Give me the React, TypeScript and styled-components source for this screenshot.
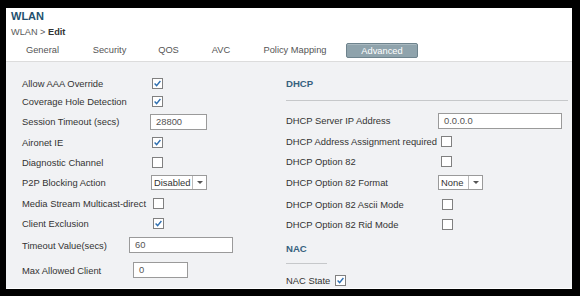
import React from "react";
import styled, { createGlobalStyle } from "styled-components";

const Global = createGlobalStyle`
  html, body { margin: 0; padding: 0; background: #000; }
  body { width: 580px; height: 296px; overflow: hidden; font-family: "Liberation Sans", Arial, sans-serif; }
`;

const Page = styled.div`
  margin: 8px 0 0 6px;
  width: 566px;
  height: 281px;
  background: #fff;
  display: flex;
  flex-direction: column;
  box-sizing: border-box;
  padding: 0 0 1px 0;
`;

const Header = styled.div`
  padding: 1px 0 0 5px;
  display: flex;
  flex-direction: column;
`;

const Title = styled.div`
  font-weight: bold;
  font-size: 11px;
  color: #23506e;
  height: 15px;
  line-height: 15px;
`;

const Crumb = styled.div`
  font-size: 9.2px;
  color: #5a5a5a;
  height: 17px;
  line-height: 17px;
  b { color: #333; }
`;

const Tabs = styled.div`
  display: flex;
  align-items: center;
  height: 19px;
`;

const Tab = styled.div<{ $w: number; $active?: boolean; $ml?: number }>`
  width: ${(p) => p.$w}px;
  margin-left: ${(p) => p.$ml ?? 0}px;
  font-size: 9.3px;
  color: ${(p) => (p.$active ? "#fff" : "#555")};
  text-align: center;
  height: 15px;
  line-height: 14px;
  box-sizing: border-box;
  ${(p) =>
    p.$active &&
    `background: #8fa3ac; border: 1px solid #6e838d; border-radius: 2px; box-shadow: inset 0 1px 0 #a9b9c0;`}
`;

const Panel = styled.div`
  flex: 1;
  margin-top: 1px;
  background: #f1f2f4;
  border-top: 1px solid #dcdcdc;
  display: grid;
  grid-template-columns: 264px 1fr;
  padding: 12px 0 0 0;
  overflow: hidden;
`;

const Col = styled.div<{ $left: number }>`
  padding-left: ${(p) => p.$left}px;
  display: flex;
  flex-direction: column;
`;

const Row = styled.div<{ $h: number; $lw: number }>`
  display: flex;
  align-items: center;
  flex: none;
  height: ${(p) => p.$h}px;
  & > span:first-child {
    width: ${(p) => p.$lw}px;
    flex: none;
    font-size: 9.4px;
    color: #333;
    white-space: nowrap;
  }
`;

const Section = styled.div<{ $lineW: number; $pt: number; $pb: number; $mb: number }>`
  font-weight: bold;
  font-size: 9.6px;
  color: #36617e;
  line-height: 20px;
  padding: ${(p) => p.$pt}px 0 ${(p) => p.$pb}px 0;
  border-bottom: 1px solid #c6c8ca;
  width: ${(p) => p.$lineW}px;
  margin-bottom: ${(p) => p.$mb}px;
  flex: none;
`;

const Box = styled.span`
  display: inline-block;
  width: 11px;
  height: 11px;
  box-sizing: border-box;
  border: 1px solid #808080;
  background: #fff;
  position: relative;
  svg { position: absolute; left: 0; top: 0; }
`;

const Input = styled.div<{ $w: number }>`
  width: ${(p) => p.$w}px;
  height: 16px;
  box-sizing: border-box;
  border: 1px solid #9a9a9a;
  background: #fff;
  font-size: 9.4px;
  color: #555;
  line-height: 14px;
  padding-left: 5px;
`;

const Select = styled.div<{ $w: number }>`
  width: ${(p) => p.$w}px;
  height: 15px;
  box-sizing: border-box;
  border: 1px solid #9a9a9a;
  background: #fff;
  display: flex;
  font-size: 9.4px;
  color: #333;
  line-height: 13px;
  span { flex: 1; padding-left: 2px; }
  i {
    width: 13px;
    border-left: 1px solid #bbb;
    display: flex;
    align-items: center;
    justify-content: center;
  }
  i::after {
    content: "";
    border-left: 3px solid transparent;
    border-right: 3px solid transparent;
    border-top: 3px solid #555;
  }
`;

const Check = ({ on }: { on?: boolean }) => (
  <Box>
    {on && (
      <svg width="9" height="9" viewBox="0 0 9 9">
        <path d="M1.6 4.6 L3.6 6.6 L7.4 2" fill="none" stroke="#2f6fb0" strokeWidth="1.4" />
      </svg>
    )}
  </Box>
);

export default function App() {
  return (
    <>
      <Global />
      <Page>
        <Header>
          <Title>WLAN</Title>
          <Crumb>
            WLAN &gt; <b>Edit</b>
          </Crumb>
          <Tabs>
            <Tab $w={63}>General</Tab>
            <Tab $w={71}>Security</Tab>
            <Tab $w={47}>QOS</Tab>
            <Tab $w={58}>AVC</Tab>
            <Tab $w={90}>Policy Mapping</Tab>
            <Tab $w={72} $ml={6} $active>
              Advanced
            </Tab>
          </Tabs>
        </Header>
        <Panel>
          <Col $left={16}>
            <Row $h={18} $lw={130}>
              <span>Allow AAA Override</span>
              <Check on />
            </Row>
            <Row $h={19} $lw={130}>
              <span>Coverage Hole Detection</span>
              <Check on />
            </Row>
            <Row $h={21} $lw={128}>
              <span>Session Timeout (secs)</span>
              <Input $w={57}>28800</Input>
            </Row>
            <Row $h={20} $lw={130}>
              <span>Aironet IE</span>
              <Check on />
            </Row>
            <Row $h={20} $lw={130}>
              <span>Diagnostic Channel</span>
              <Check />
            </Row>
            <Row $h={21} $lw={129}>
              <span>P2P Blocking Action</span>
              <Select $w={56}>
                <span>Disabled</span>
                <i />
              </Select>
            </Row>
            <Row $h={20} $lw={131}>
              <span>Media Stream Multicast-direct</span>
              <Check />
            </Row>
            <Row $h={20} $lw={131}>
              <span>Client Exclusion</span>
              <Check on />
            </Row>
            <Row $h={24} $lw={107}>
              <span>Timeout Value(secs)</span>
              <Input $w={104}>60</Input>
            </Row>
            <Row $h={26} $lw={111}>
              <span>Max Allowed Client</span>
              <Input $w={55}>0</Input>
            </Row>
          </Col>
          <Col $left={16}>
            <Section $lineW={282} $pt={0} $pb={6} $mb={9}>
              DHCP
            </Section>
            <Row $h={21} $lw={152}>
              <span>DHCP Server IP Address</span>
              <Input $w={124}>0.0.0.0</Input>
            </Row>
            <Row $h={20} $lw={155}>
              <span>DHCP Address Assignment required</span>
              <Check />
            </Row>
            <Row $h={20} $lw={155}>
              <span>DHCP Option 82</span>
              <Check />
            </Row>
            <Row $h={23} $lw={152}>
              <span>DHCP Option 82 Format</span>
              <Select $w={45}>
                <span>None</span>
                <i />
              </Select>
            </Row>
            <Row $h={20} $lw={156}>
              <span>DHCP Option 82 Ascii Mode</span>
              <Check />
            </Row>
            <Row $h={20} $lw={156}>
              <span>DHCP Option 82 Rid Mode</span>
              <Check />
            </Row>
            <Section $lineW={41} $pt={5} $pb={4} $mb={7}>
              NAC
            </Section>
            <Row $h={18} $lw={49}>
              <span>NAC State</span>
              <Check on />
            </Row>
          </Col>
        </Panel>
      </Page>
    </>
  );
}
